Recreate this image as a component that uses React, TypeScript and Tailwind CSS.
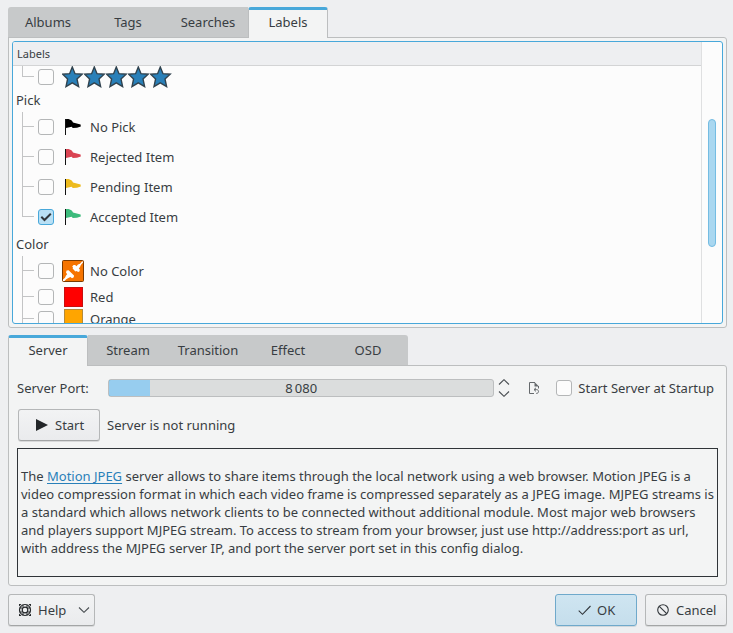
import type { ReactNode } from 'react';

function TabButton({ label, active, edge = '' }: { label: string; active?: boolean; edge?: string }) {
  return (
    <button
      type="button"
      role="tab"
      aria-selected={!!active}
      className={`h-[31px] w-20 text-center ${edge} ${
        active
          ? 'relative rounded-t-[3px] border-x border-t-[3px] border-x-[#bcbebf] border-t-[#48a8da] bg-[#f3f4f4] pb-1'
          : 'border-b border-[#bcbebf] bg-[#c7c9ca]'
      }`}
    >
      {label}
    </button>
  );
}

function Check({ id, checked, className = '' }: { id: string; checked?: boolean; className?: string }) {
  return (
    <span className={`grid size-4 shrink-0 ${className}`}>
      <input
        id={id}
        type="checkbox"
        defaultChecked={checked}
        className="peer col-start-1 row-start-1 size-4 appearance-none rounded-[3px] border border-[#b4b6b7] bg-[#fcfcfc] checked:border-[#48a8da] checked:bg-[#b9e0f5]"
      />
      <svg viewBox="0 0 16 16" className="pointer-events-none invisible col-start-1 row-start-1 size-4 peer-checked:visible" fill="none" stroke="#31363b" strokeWidth="2">
        <path d="M3.3 7.8 L6.5 11 L12.8 4.8" />
      </svg>
    </span>
  );
}

function Branch({ last }: { last?: boolean }) {
  return (
    <span aria-hidden="true" className="flex h-full w-3 shrink-0 flex-col">
      <span className="h-1/2 border-b border-l border-[#c3c4c5]" />
      <span className={`h-1/2 ${last ? '' : 'border-l border-[#c3c4c5]'}`} />
    </span>
  );
}

function TreeRow({ id, icon, label, last, checked, height }: { id: string; icon: ReactNode; label?: string; last?: boolean; checked?: boolean; height: string }) {
  return (
    <li className={`flex items-center pl-[9px] ${height}`}>
      <Branch last={last} />
      <Check id={id} checked={checked} className="ml-1" />
      <label htmlFor={id} className="ml-2 flex items-center" aria-label={label ?? 'Five stars'}>
        {icon}
        {label && <span className="ml-1.5">{label}</span>}
      </label>
    </li>
  );
}

function Flag({ color }: { color: string }) {
  return (
    <svg viewBox="0 0 22 22" className="size-[22px]">
      <path d="M3.5 3v16" stroke="#111" strokeWidth="1" />
      <path d="M4 3.2 C6 2.8 8.2 3.4 10 4.8 L11 6.4 L18.6 8.4 L18.8 10.4 L15 11.8 L10.8 12 L9.6 10.8 L4 12 Z" fill={color} />
    </svg>
  );
}

function Star() {
  return (
    <svg viewBox="0 0 22 22" className="size-[22px]">
      <path d="M10.3 1 L13 7.7 L20.2 8.2 L15 12.9 L16.6 20.6 L10.3 16.8 L4 20.6 L5.6 12.9 L0.6 8.2 L7.6 7.7 Z" fill="#2980b9" stroke="#31434f" strokeWidth="1.4" />
    </svg>
  );
}

function NoColor() {
  return (
    <svg viewBox="0 0 22 22" className="size-[22px]">
      <rect x="0.5" y="0.5" width="21" height="21" rx="1" fill="#f67400" stroke="#7b3a00" />
      <g fill="#fff">
        <path d="M11.6 5 L13.2 5 L14.4 6.2 L16 4.4 L18 3.8 L20 1.4 L21 1.4 L21 2.6 L18.8 5 L18 7 L16.8 8.4 L17.8 9.6 L17.6 11.2 L16.2 12 L14.6 11 L13.4 11.4 L10.6 8.6 L11 7.4 L10.2 6.4 Z" />
        <path d="M4.6 10.6 L6.6 10.2 L12 15.4 L11.8 17.2 L10 18.2 L8.4 17 L6.4 18 L4.2 19.2 L2.6 21 L1 21 L1 19.4 L3 17.8 L4 15.6 L5.2 14.2 L4 12.6 Z" />
      </g>
    </svg>
  );
}

function Swatch({ className }: { className: string }) {
  return <span className={`mr-px ml-0.5 h-5 w-[19px] border ${className}`} />;
}

const pushButton =
  'flex h-8 items-center rounded-[3px] border border-[#b5b7b8] border-b-[#a3a5a6] bg-linear-to-b from-[#f2f3f4] to-[#eaebed] shadow-[0_1px_0_#d8d9da]';

export default function App() {
  return (
    <main className="min-h-screen bg-[#eeeff1] pt-[7px] pr-1.5 pb-[7px] pl-2 font-['Noto_Sans',sans-serif] text-[13px] leading-[18px] text-[#383d42]">
      <div role="tablist" className="flex">
        <TabButton label="Albums" edge="rounded-tl-[3px]" />
        <TabButton label="Tags" />
        <TabButton label="Searches" />
        <TabButton label="Labels" active />
      </div>
      <section className="-mt-px rounded-b-[3px] rounded-tr-[3px] border border-[#bcbebf] bg-[#f3f4f4] p-[3px]">
        <div className="flex h-[283px] overflow-hidden rounded-[3px] border border-[#48a8da] bg-[#fcfcfc]">
          <div className="flex min-w-0 flex-1 flex-col">
            <div className="h-6 shrink-0 border-b border-[#d3d4d5] bg-[#eeeff1] pl-1 text-[11px] leading-6">Labels</div>
            <ul className="min-h-0 flex-1 overflow-hidden">
              <TreeRow
                id="five"
                height="h-[22px]"
                last
                icon={
                  <span className="flex">
                    <Star />
                    <Star />
                    <Star />
                    <Star />
                    <Star />
                  </span>
                }
              />
              <li className="flex h-6 items-center pl-[3px]">Pick</li>
              <TreeRow id="nopick" height="h-[30px]" icon={<Flag color="#000000" />} label="No Pick" />
              <TreeRow id="rejected" height="h-[30px]" icon={<Flag color="#da4453" />} label="Rejected Item" />
              <TreeRow id="pending" height="h-[30px]" icon={<Flag color="#edbb1f" />} label="Pending Item" />
              <TreeRow id="accepted" height="h-[30px]" icon={<Flag color="#3dbb7c" />} label="Accepted Item" last checked />
              <li className="flex h-6 items-center pl-[3px]">Color</li>
              <TreeRow id="nocolor" height="h-[30px]" icon={<NoColor />} label="No Color" />
              <TreeRow id="red" height="h-[22px]" icon={<Swatch className="border-[#c80f0f] bg-[#ff0000]" />} label="Red" />
              <TreeRow id="orange" height="h-[22px]" icon={<Swatch className="border-[#b58a3a] bg-[#ffa500]" />} label="Orange" />
            </ul>
          </div>
          <div className="w-[21px] border-l border-[#dfe0e1] pt-[77px] pl-1.5">
            <div className="h-32 w-2 rounded-full border border-[#74bce2] bg-[#a9d7f0]" />
          </div>
        </div>
      </section>

      <div role="tablist" className="mt-[7px] flex">
        <TabButton label="Server" active />
        <TabButton label="Stream" />
        <TabButton label="Transition" />
        <TabButton label="Effect" />
        <TabButton label="OSD" edge="rounded-tr-[3px]" />
      </div>
      <section className="-mt-px rounded-b-[3px] rounded-tr-[3px] border border-[#bcbebf] bg-[#f3f4f4] p-2">
        <div className="mt-[3px] flex h-[22px] items-center">
          <label htmlFor="port" className="w-[91px]">
            Server Port:
          </label>
          <div className="relative h-[18px] min-w-0 flex-1 overflow-hidden rounded-[3px] border border-[#bcbebf] bg-[#dbdddd]">
            <div className="absolute -inset-y-px -left-px w-[11%] rounded-l-[3px] border border-r-0 border-[#48a8da] bg-[#97cdef]" />
            <input id="port" type="text" defaultValue={'8\u202f080'} className="relative block h-4 w-full bg-transparent text-center leading-4 outline-none" />
          </div>
          <div className="ml-1 flex w-3 flex-col gap-1.5">
            <button type="button" aria-label="Increase port">
              <svg viewBox="0 0 12 6" className="block h-1.5 w-3" fill="none" stroke="#4a4f53" strokeWidth="1.1">
                <path d="M1 5.5 L6 0.7 L11 5.5" />
              </svg>
            </button>
            <button type="button" aria-label="Decrease port">
              <svg viewBox="0 0 12 6" className="block h-1.5 w-3" fill="none" stroke="#4a4f53" strokeWidth="1.1">
                <path d="M1 0.5 L6 5.3 L11 0.5" />
              </svg>
            </button>
          </div>
          <button type="button" aria-label="Reset port" className="ml-4">
            <svg viewBox="0 0 16 16" className="block size-4" fill="none" stroke="#65696c">
              <path d="M8 13.5 H3.5 V2.5 H9 M12.5 6 V8.5" />
              <path d="M8.5 2 L13 6.5 H8.5 Z" fill="#65696c" stroke="none" />
              <path d="M10 7.8 L8 9.6 L10 11.4 M8.2 9.6 H10.5 C13.2 9.6 13.2 13.4 10.5 13.4 H10" />
            </svg>
          </button>
          <Check id="startup" className="ml-3.5" />
          <label htmlFor="startup" className="mr-1 ml-1.5 whitespace-nowrap">
            Start Server at Startup
          </label>
        </div>
        <div className="mt-2.5 ml-px flex items-center gap-[7px]">
          <button type="button" className={`${pushButton} w-[82px] pl-4`}>
            <svg viewBox="0 0 13 12" className="mr-[7px] h-3 w-[13px]" fill="#232629">
              <path d="M1 0 L13 6 L1 12 Z" />
            </svg>
            Start
          </button>
          <span>Server is not running</span>
        </div>
        <p className="mt-[7px] border border-[#2f3438] px-[3px] pt-[18px] pb-[19px]">
          The{' '}
          <a href="#motion-jpeg" className="text-[#2980b9] underline underline-offset-2">
            Motion JPEG
          </a>{' '}
          server allows to share items through the local network using a web browser. Motion JPEG is a video compression format in which each video frame is compressed separately as a JPEG image. MJPEG streams is a standard which allows network clients to be connected without additional module. Most major web browsers and players support MJPEG stream. To access to stream from your browser, just use http://address:port as url, with address the MJPEG server IP, and port the server port set in this config dialog.
        </p>
      </section>

      <footer className="mt-2 flex gap-2">
        <button type="button" className={`${pushButton} w-[87px] pl-[9px]`}>
          <svg viewBox="0 0 14 14" className="mr-1.5 size-3.5" fill="none" stroke="#232629">
            <circle cx="7" cy="7" r="5.5" strokeWidth="1.2" />
            <circle cx="7" cy="7" r="2.8" strokeWidth="1.2" />
            <path d="M5 1.5 V4.5 M9 1.5 V4.5 M5 9.5 V12.5 M9 9.5 V12.5 M1.5 5 H4.5 M1.5 9 H4.5 M9.5 5 H12.5 M9.5 9 H12.5" />
            <path d="M1 1 H3.6 L1 3.6 Z M13 1 V3.6 L10.4 1 Z M1 13 V10.4 L3.6 13 Z M13 13 H10.4 L13 10.4 Z" fill="#232629" stroke="none" />
          </svg>
          Help
          <svg viewBox="0 0 12 6" className="ml-auto mr-1 h-1.5 w-3" fill="none" stroke="#4a4f53" strokeWidth="1.1">
            <path d="M1 0.5 L6 5.3 L11 0.5" />
          </svg>
        </button>
        <button type="button" className="ml-auto flex h-8 w-[82px] items-center rounded-[3px] border border-[#6fa9cb] bg-linear-to-b from-[#cfe5f1] to-[#c5deec] pl-[22px] shadow-[0_1px_0_#d0d8dc]">
          <svg viewBox="0 0 13 12" className="mr-1.5 h-3 w-[13px]" fill="none" stroke="#31363b" strokeWidth="1.1">
            <path d="M0.7 6.7 L4.5 10.3 L12.5 2" />
          </svg>
          OK
        </button>
        <button type="button" className={`${pushButton} w-[82px] pl-[11px]`}>
          <svg viewBox="0 0 12 12" className="mr-[7px] size-3" fill="none" stroke="#31363b" strokeWidth="1.1">
            <circle cx="6" cy="6" r="5.3" />
            <path d="M2.3 2.3 L9.7 9.7" />
          </svg>
          Cancel
        </button>
      </footer>
    </main>
  );
}
